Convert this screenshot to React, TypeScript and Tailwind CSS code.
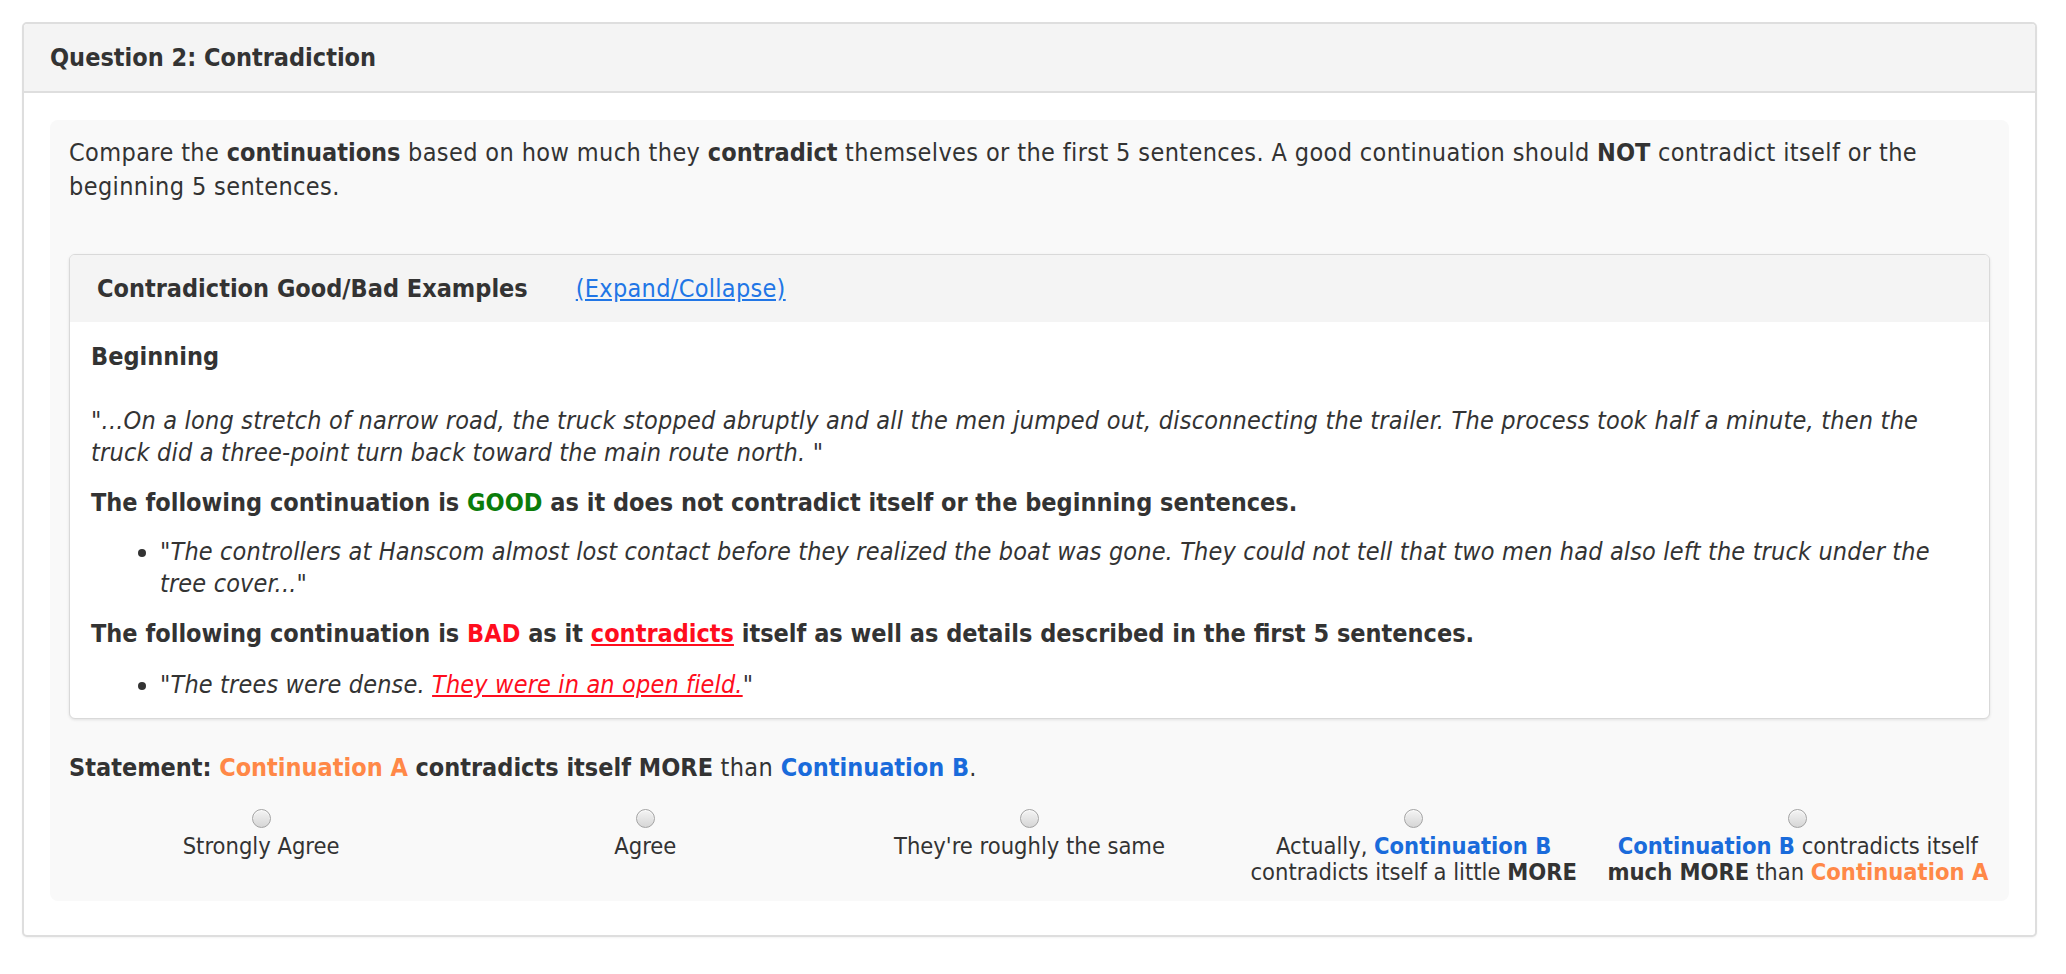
import React from "react";

const Radio = () => (
  <span className="block w-[19px] h-[19px] rounded-full border border-[#a3a3a3] bg-gradient-to-b from-[#f4f4f4] to-[#d6d6d6] shadow-[inset_0_1px_1px_rgba(255,255,255,0.8)]" />
);

const A = () => <b className="text-[#ff8847] tracking-normal">Continuation A</b>;
const B = () => <b className="text-[#1a6bdb] tracking-normal">Continuation B</b>;
const S = ({ children }: { children: React.ReactNode }) => <b className="tracking-normal">{children}</b>;

export default function App() {
  const opts: React.ReactNode[] = [
    <>Strongly Agree</>,
    <>Agree</>,
    <>They're roughly the same</>,
    <>
      Actually, <B />
      <br />
      contradicts itself a little <S>MORE</S>
    </>,
    <>
      <B /> contradicts itself
      <br />
      <S>much MORE</S> than <A />
    </>,
  ];
  return (
    <div
      className="min-h-screen bg-white pt-[22px] pl-[22px] pr-[29px] text-[#333] text-[25px] tracking-[0.38px]"
      style={{ fontFamily: '"DejaVu Sans Condensed", "DejaVu Sans", sans-serif', fontStretch: "condensed" }}
    >
      <div className="border-2 border-[#dedede] rounded-[5px] bg-white shadow-[0_1px_2px_rgba(0,0,0,0.05)]">
        <div className="h-[69px] bg-[#f4f4f4] border-b-2 border-[#dedede] flex items-center px-[26px] rounded-t-[4px]">
          <S>Question 2: Contradiction</S>
        </div>
        <div className="pt-[27px] pb-[34px] px-[26px]">
          <div className="bg-[#f9f9f9] rounded-[8px] pt-[16px] pb-[16px] px-[19px]">
            <p className="leading-[34px]">
              Compare the <S>continuations</S> based on how much they <S>contradict</S> themselves or the first 5
              sentences. A good continuation should <S>NOT</S> contradict itself or the beginning 5 sentences.
            </p>
            <div className="mt-[50px] border border-[#d9d9d9] rounded-[6px] bg-white shadow-[0_1px_3px_rgba(0,0,0,0.1)] overflow-hidden">
              <div className="h-[67px] bg-[#f4f4f4] flex items-center px-[27px] gap-[48px]">
                <S>Contradiction Good/Bad Examples</S>
                <a href="#" className="text-[#2176e6] underline tracking-[0.3px]">
                  (Expand/Collapse)
                </a>
              </div>
              <div className="px-[21px] pt-[18px] pb-[17px] leading-[32px]">
                <p className="font-bold tracking-normal leading-[34px]">Beginning</p>
                <p className="italic tracking-[0.2px] mt-[31px]">
                  "...On a long stretch of narrow road, the truck stopped abruptly and all the men jumped out,
                  disconnecting the trailer. The process took half a minute, then the truck did a three-point turn back
                  toward the main route north. "
                </p>
                <p className="font-bold tracking-normal mt-[18px]">
                  The following continuation is <span className="text-[#0b7d0b]">GOOD</span> as it does not contradict
                  itself or the beginning sentences.
                </p>
                <ul className="list-disc pl-[69px] mt-[17px] pr-[20px] tracking-[0.15px]">
                  <li>
                    "
                    <i>
                      The controllers at Hanscom almost lost contact before they realized the boat was gone. They could
                      not tell that two men had also left the truck under the tree cover...
                    </i>
                    "
                  </li>
                </ul>
                <p className="font-bold tracking-normal mt-[18px]">
                  The following continuation is <span className="text-[#ff0d1d]">BAD</span> as it{" "}
                  <span className="text-[#ff0d1d] underline">contradicts</span> itself as well as details described in
                  the first 5 sentences.
                </p>
                <ul className="list-disc pl-[69px] mt-[19px] tracking-[0.15px]">
                  <li>
                    "<i>The trees were dense. </i>
                    <i className="text-[#ff0d1d] underline">They were in an open field.</i>"
                  </li>
                </ul>
              </div>
            </div>
            <p className="mt-[32px] leading-[34px]">
              <S>Statement:</S> <A /> <S>contradicts itself MORE</S> than <B />.
            </p>
            <div className="grid grid-cols-5 mt-[24px] text-[23.5px] tracking-normal">
              {opts.map((o, i) => (
                <div key={i} className="flex flex-col items-center text-center">
                  <Radio />
                  <div className="leading-[26px] mt-[5px] whitespace-nowrap">{o}</div>
                </div>
              ))}
            </div>
          </div>
        </div>
      </div>
    </div>
  );
}
